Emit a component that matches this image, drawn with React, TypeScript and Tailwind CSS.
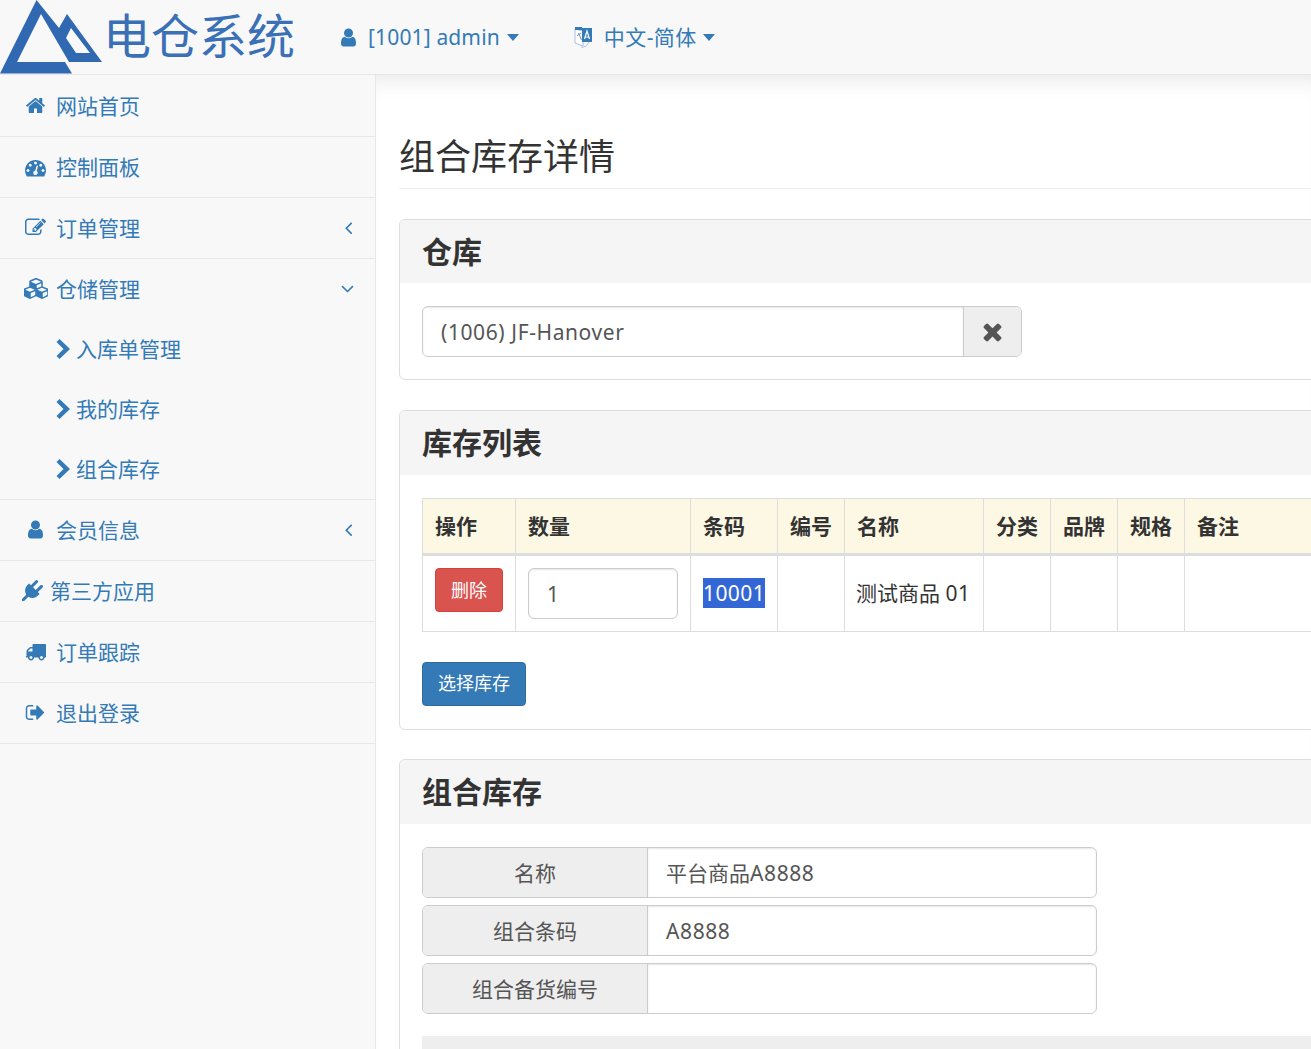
import React from "react";

const P = {
  home: "M1472 992v480q0 26-19 45t-45 19h-384v-384h-256v384h-384q-26 0-45-19t-19-45v-480q0-1 .5-3t.5-3l575-474 575 474q1 2 1 6zm223-69l-62 74q-8 9-21 11h-3q-13 0-21-7l-692-577-692 577q-12 8-24 7-13-2-21-11l-62-74q-8-10-7-23.500t11-21.500l719-599q32-26 76-26t76 26l244 204v-195q0-14 9-23t23-9h192q14 0 23 9t9 23v408l219 182q10 8 11 21.500t-7 23.500z",
  user: "M1536 1399q0 109-62.500 187t-150.500 78h-854q-88 0-150.500-78t-62.500-187q0-85 8.500-160.500t31.500-152 58.500-131 94-89 134.500-34.500q131 128 313 128t313-128q76 0 134.500 34.500t94 89 58.500 131 31.500 152 8.500 160.500zm-256-887q0 159-112.500 271.500t-271.500 112.500-271.500-112.500-112.500-271.500 112.500-271.500 271.500-112.500 271.500 112.500 112.500 271.500z",
  times: "M1490 1322q0 40-28 68l-136 136q-28 28-68 28t-68-28l-294-294-294 294q-28 28-68 28t-68-28l-136-136q-28-28-28-68t28-68l294-294-294-294q-28-28-28-68t28-68l136-136q28-28 68-28t68 28l294 294 294-294q28-28 68-28t68 28l136 136q28 28 28 68t-28 68l-294 294 294 294q28 28 28 68z",
  dash: "M384 1152q0-53-37.500-90.500t-90.500-37.500-90.500 37.500-37.500 90.500 37.500 90.500 90.500 37.500 90.500-37.500 37.500-90.500zm192-448q0-53-37.500-90.500t-90.500-37.500-90.500 37.500-37.500 90.500 37.500 90.500 90.500 37.500 90.500-37.500 37.500-90.500zm428 481l101-382q6-26-7.500-48.500t-38.500-29.500-48 6.500-30 39.500l-101 382q-60 5-107 43.500t-63 98.500q-20 77 20 146t117 89 146-20 89-117q16-60-6-117t-72-91zm660-33q0-53-37.500-90.500t-90.500-37.500-90.500 37.500-37.500 90.500 37.500 90.500 90.500 37.500 90.500-37.500 37.500-90.500zm-640-640q0-53-37.500-90.500t-90.500-37.500-90.500 37.500-37.500 90.500 37.500 90.500 90.500 37.500 90.500-37.500 37.500-90.500zm448 192q0-53-37.500-90.500t-90.500-37.500-90.500 37.500-37.500 90.500 37.500 90.500 90.500 37.500 90.500-37.500 37.500-90.500zm320 448q0 261-141 483-19 29-54 29h-1402q-35 0-54-29-141-221-141-483 0-182 71-348t191-286 286-191 348-71 348 71 286 191 191 286 71 348z",
  edit: "M888 1184l116-116-152-152-116 116v56h96v96h56zm440-720q-16-16-33 1l-350 350q-17 17-1 33t33-1l350-350q17-17 1-33zm80 594v190q0 119-84.500 203.500t-203.500 84.500h-832q-119 0-203.500-84.500t-84.500-203.500v-832q0-119 84.500-203.500t203.500-84.500h832q63 0 117 25 15 7 18 23 3 17-9 29l-49 49q-14 14-32 8-23-6-45-6h-832q-66 0-113 47t-47 113v832q0 66 47 113t113 47h832q66 0 113-47t47-113v-126q0-13 9-22l64-64q15-15 35-7t20 29zm-96-738l288 288-672 672h-288v-288zm444 132l-92 92-288-288 92-92q28-28 68-28t68 28l152 152q28 28 28 68t-28 68z",
  cubes: "M576 1632l384-192v-314l-384 164v342zm-64-454l404-173-404-173-404 173zm1088 454l384-192v-314l-384 164v342zm-64-454l404-173-404-173-404 173zm-448-293l384-165v-266l-384 164v267zm-64-379l441-189-441-189-441 189zm1088 518v416q0 36-19 67t-52 47l-448 224q-25 14-57 14t-57-14l-448-224q-4-2-7-4-2 2-7 4l-448 224q-25 14-57 14t-57-14l-448-224q-33-16-52-47t-19-67v-416q0-38 21.500-70t56.500-48l434-186v-400q0-38 21.500-70t56.500-48l448-192q23-10 50-10t50 10l448 192q35 16 56.500 48t21.500 70v400l434 186q36 16 57 48t21 70z",
  plug: "M1755 453q37 38 37 90.500t-37 90.500l-401 400 150 150-160 160q-163 163-389.500 186.500t-411.500-100.500l-362 362h-181v-181l362-362q-124-185-100.500-411.500t186.500-389.500l160-160 150 150 400-401q38-37 91-37t90 37 37 90.500-37 90.500l-400 401 234 234 401-400q38-37 91-37t90 37z",
  truck: "M640 1408q0-52-38-90t-90-38-90 38-38 90 38 90 90 38 90-38 38-90zm-384-512h384v-256h-158q-13 0-22 9l-195 195q-9 9-9 22v30zm1280 512q0-52-38-90t-90-38-90 38-38 90 38 90 90 38 90-38 38-90zm256-1088v1024q0 15-4 26.500t-13.500 18.500-16.500 11.500-23.500 6-22.500 2-25.500 0-22.500-.5q0 106-75 181t-181 75-181-75-75-181h-384q0 106-75 181t-181 75-181-75-75-181h-64q-3 0-22.500.5t-25.500 0-22.500-2-23.500-6-16.500-11.500-13.500-18.500-4-26.500q0-26 19-45t45-19v-320q0-8-.5-35t0-38 2.500-34.500 6.500-37 14-30.500 22.500-30l198-198q19-19 50.500-32t58.500-13h160v-192q0-26 19-45t45-19h1024q26 0 45 19t19 45z",
  out: "M704 1440q0 4 1 20t.5 26.500-3 23.500-10 19.500-20.500 6.500h-320q-119 0-203.500-84.500t-84.500-203.500v-704q0-119 84.500-203.500t203.500-84.500h320q13 0 22.500 9.500t9.500 22.500q0 4 1 20t.5 26.500-3 23.500-10 19.500-20.500 6.500h-320q-66 0-113 47t-47 113v704q0 66 47 113t113 47h312l11.500 1 11.500 3 8 5.500 7 9 2 13.500zm928-544q0 26-19 45l-544 544q-19 19-45 19t-45-19-19-45v-288h-448q-26 0-45-19t-19-45v-384q0-26 19-45t45-19h448v-288q0-26 19-45t45-19 45 19l544 544q19 19 19 45z",
  left: "M1203 544q0 13-10 23l-393 393 393 393q10 10 10 23t-10 23l-50 50q-10 10-23 10t-23-10l-466-466q-10-10-10-23t10-23l466-466q10-10 23-10t23 10l50 50q10 10 10 23z",
  down: "M1395 736q0 13-10 23l-466 466q-10 10-23 10t-23-10l-466-466q-10-10-10-23t10-23l50-50q10-10 23-10t23 10l393 393 393-393q10-10 23-10t23 10l50 50q10 10 10 23z",
};

function Fa({ d, size = 21, vw = 1792, className = "" }: { d: string; size?: number; vw?: number; className?: string }) {
  return (
    <svg viewBox={`0 0 ${vw} 1792`} width={(size * vw) / 1792} height={size} fill="currentColor" className={`shrink-0 ${className}`}>
      <path d={d} />
    </svg>
  );
}

function Caret() {
  return <span className="inline-block w-0 h-0 border-l-[6px] border-r-[6px] border-t-[7px] border-l-transparent border-r-transparent border-t-[#337ab7]" />;
}

function Item({ icon, vw, text, arrow, narrow, first, top }: { icon: string; vw?: number; text: string; arrow?: boolean; narrow?: boolean; first?: boolean; top?: boolean }) {
  return (
    <div className={`${first ? "h-[62px]" : "h-[61px]"} ${top ? "" : "pb-[1px]"} border-b border-[#e7e7e7] flex items-center pl-[22px] pr-[16px] text-[#337ab7]`}>
      <span className={`flex justify-center mr-[7px] ${narrow ? "w-[21px]" : "w-[27px]"}`}>
        <Fa d={icon} vw={vw} />
      </span>
      <span>{text}</span>
      {arrow && <Fa d={P.left} className="ml-auto" />}
    </div>
  );
}

function Sub({ text }: { text: string }) {
  return (
    <div className="h-[60px] pb-[1px] flex items-center pl-[56px] text-[#337ab7]">
      <svg viewBox="0 0 14 20" width="14" height="20" fill="currentColor" className="shrink-0 mr-[6px]">
        <path d="M3.500 0L14 10L3.500 20L0.500 17L7.500 10L0.500 3Z" />
      </svg>
      <span>{text}</span>
    </div>
  );
}

function Panel({ title, first, children }: { title: string; first?: boolean; children: React.ReactNode }) {
  return (
    <section className={`w-[1000px] border border-[#ddd] rounded-[6px] bg-white ${first ? "mb-[30px]" : "mb-[29px]"}`}>
      <div className={`bg-[#f5f5f5] rounded-t-[6px] px-[22px] flex items-center text-[30px] font-bold text-[#333] ${first ? "h-[63px]" : "h-[64px]"}`}>{title}</div>
      <div className="p-[22px] pt-[23px]">{children}</div>
    </section>
  );
}

function Field({ label, value }: { label: string; value: React.ReactNode }) {
  return (
    <div className="flex w-[675px] h-[51px] mb-[7px] border border-[#ccc] rounded-[6px] overflow-hidden text-[#555]">
      <div className="w-[225px] bg-[#eee] border-r border-[#ccc] flex items-center justify-center">{label}</div>
      <div className="flex-1 pl-[18px] flex items-center shadow-[inset_0_1px_2px_rgba(0,0,0,0.1)]">{value}</div>
    </div>
  );
}

const heads = ["操作", "数量", "条码", "编号", "名称", "分类", "品牌", "规格", "备注"];
const widths = ["w-[93px]", "w-[175px]", "w-[87px]", "w-[67px]", "w-[139px]", "w-[67px]", "w-[67px]", "w-[67px]", "w-auto"];

export default function App() {
  return (
    <div className="w-[1311px] h-[1049px] overflow-hidden bg-white flex flex-col text-[21px] leading-[30px] text-[#333] font-['Noto_Sans','Noto_Sans_CJK_SC',sans-serif]">
      <header className="h-[75px] shrink-0 bg-[#f8f8f8] border-b border-[#e7e7e7] flex items-center">
        <svg viewBox="0 0 103 74" width="103" height="74" className="shrink-0">
          <path fillRule="evenodd" fill="#3068b2" d="M36.500 0L59 28L67 14L102 62H78H69L41 14L17 62H65L72 73.500H0Z M71 28L90 53H76L66 38Z" />
        </svg>
        <span className="text-[48px] leading-[74px] font-normal text-[#3a70b6] w-[236px] pb-[2px] whitespace-nowrap">电仓系统</span>
        <span className="flex items-center text-[#337ab7]">
          <Fa d={P.user} className="mr-[8px] translate-x-[-1px]" />
          <span className="mr-[7px] tracking-[0.15px]">[1001] admin</span>
          <Caret />
        </span>
        <span className="flex items-center text-[#337ab7] ml-[54px]">
          <svg viewBox="0 0 20 24" width="20" height="24" className="mr-[11px]">
            <path d="M2 4l8 2v15l-8-3z" fill="#fff" stroke="#a9c0db" strokeWidth="1" />
            <path d="M4 11l4-3M5.500 8l3 7" stroke="#6d93bd" strokeWidth="1" fill="none" />
            <path d="M9 3h10v14H9z" fill="#337ab7" />
            <path d="M2 2h7v3H2z" fill="#337ab7" />
            <path d="M11.500 14l2.500-8 2.500 8M12.500 12h3" stroke="#fff" strokeWidth="1.200" fill="none" />
            <path d="M8 22q5 1 8-5" stroke="#a9c0db" fill="none" />
          </svg>
          <span className="mr-[6px] tracking-[0.4px]">中文-简体</span>
          <Caret />
        </span>
      </header>

      <div className="flex-1 flex min-h-0">
        <aside className="w-[376px] shrink-0 bg-[#f8f8f8] border-r border-[#e7e7e7]">
          <Item icon={P.home} text="网站首页" first top />
          <Item icon={P.dash} text="控制面板" top />
          <Item icon={P.edit} text="订单管理" arrow />
          <div className="border-b border-[#e7e7e7]">
            <div className="h-[60px] pb-[1px] flex items-center pl-[22px] pr-[17px] text-[#337ab7]">
              <span className="flex justify-center w-[27px] mr-[7px]"><Fa d={P.cubes} vw={2048} /></span>
              <span>仓储管理</span>
              <Fa d={P.down} className="ml-auto" />
            </div>
            <Sub text="入库单管理" />
            <Sub text="我的库存" />
            <Sub text="组合库存" />
          </div>
          <Item icon={P.user} text="会员信息" arrow />
          <Item icon={P.plug} text="第三方应用" narrow />
          <Item icon={P.truck} text="订单跟踪" />
          <Item icon={P.out} text="退出登录" />
        </aside>

        <main className="flex-1 min-w-0 pl-[23px] bg-white shadow-[inset_0_22px_22px_-18px_rgba(0,0,0,0.1)]">
          <div className="w-[1000px] mt-[59px] h-[55px] border-b border-[#eee] mb-[30px]">
            <h1 className="text-[36px] leading-[46px] font-normal text-[#333]">组合库存详情</h1>
          </div>

          <Panel title="仓库" first>
            <div className="flex w-[600px] h-[51px] border border-[#ccc] rounded-[6px] overflow-hidden text-[#555]">
              <div className="flex-1 pl-[18px] pt-[1px] flex items-center tracking-[0.6px] shadow-[inset_0_1px_2px_rgba(0,0,0,0.1)]">(1006) JF-Hanover</div>
              <div className="w-[58px] bg-[#eee] border-l border-[#ccc] flex items-center justify-center"><Fa d={P.times} size={27} /></div>
            </div>
          </Panel>

          <Panel title="库存列表">
            <table className="table-fixed w-[955px] border-collapse border border-[#ddd]">
              <thead>
                <tr className="bg-[#fcf8e3] h-[56px]">
                  {heads.map((h, i) => (
                    <th key={h} className={`${widths[i]} border border-[#ddd] border-b-[3px] px-[12px] text-left font-bold`}>{h}</th>
                  ))}
                </tr>
              </thead>
              <tbody>
                <tr className="h-[77px]">
                  <td className="border border-[#ddd] px-[12px]">
                    <button className="w-[68px] h-[44px] mb-[7px] bg-[#d9534f] border border-[#d43f3a] rounded-[4px] text-white text-[18px] flex items-center justify-center pb-[1px]">删除</button>
                  </td>
                  <td className="border border-[#ddd] px-[12px]">
                    <div className="w-[150px] h-[51px] border border-[#ccc] rounded-[6px] pl-[18px] pt-[1px] flex items-center text-[#555] shadow-[inset_0_1px_2px_rgba(0,0,0,0.1)]">1</div>
                  </td>
                  <td className="border border-[#ddd] px-[12px] pb-[2px]"><span className="bg-[#3367d6] text-white inline-block leading-[30px] tracking-[0.4px]">10001</span></td>
                  <td className="border border-[#ddd]"></td>
                  <td className="border border-[#ddd] px-[11px] pb-[2px] whitespace-nowrap">测试商品 <span className="tracking-[0.6px]">01</span></td>
                  <td className="border border-[#ddd]"></td>
                  <td className="border border-[#ddd]"></td>
                  <td className="border border-[#ddd]"></td>
                  <td className="border border-[#ddd]"></td>
                </tr>
              </tbody>
            </table>
            <button className="block mt-[30px] mb-[1px] pb-[2px] w-[104px] h-[44px] bg-[#337ab7] border border-[#2e6da4] rounded-[4px] text-white text-[18px]">选择库存</button>
          </Panel>

          <Panel title="组合库存">
            <Field label="名称" value={<>平台商品<span className="tracking-[0.6px]">A8888</span></>} />
            <Field label="组合条码" value={<span className="tracking-[0.6px]">A8888</span>} />
            <Field label="组合备货编号" value="" />
            <div className="h-[40px] mt-[22px] bg-[#eee]" />
          </Panel>
        </main>
      </div>
    </div>
  );
}
